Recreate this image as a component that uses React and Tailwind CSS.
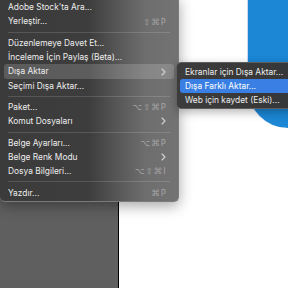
import React from "react";

const Chevron = () => (
  <svg width="5" height="8" viewBox="0 0 5 8" className="shrink-0">
    <path d="M1 1 L4 4 L1 7" fill="none" stroke="#d4d4d4" strokeWidth="1.1" strokeLinecap="round" strokeLinejoin="round" />
  </svg>
);

const Row = ({ label, shortcut, sub, active }) => (
  <div className="h-[14.2px] mx-[4px]">
    <div
      className={
        "h-full flex items-center justify-between pl-[4px] pr-[8px] rounded-[3px] " +
        (active ? "bg-[rgba(255,255,255,0.17)]" : "")
      }
    >
      <span className="text-[#ededed] whitespace-nowrap">{label}</span>
      {shortcut && (
        <span
          className="text-[#a6a6a6] tracking-[1.2px] whitespace-nowrap mr-[-1px]"
          style={{ fontFamily: "'DejaVu Sans', Inter, sans-serif", fontSize: "8.3px" }}
        >
          {shortcut}
        </span>
      )}
      {sub && <Chevron />}
    </div>
  </div>
);

const Sep = () => (
  <div className="h-[7.3px] flex items-center px-[8px]">
    <div className="h-px w-full bg-[rgba(255,255,255,0.14)]" />
  </div>
);

export default function App() {
  return (
    <div
      className="relative w-[288px] h-[288px] overflow-hidden bg-white flex"
      style={{ fontFamily: "Inter, 'Noto Sans', sans-serif" }}
    >
      <div className="w-[119px] h-full bg-[#5f5f5f] border-r border-black" />
      <div className="flex-1 h-full flex justify-end">
        <div className="w-[41px] h-[128px] bg-[#1b87d5] rounded-bl-[42px] border-l border-[#cdd5f3]" />
      </div>

      <div
        className="absolute left-0 top-[-4px] w-[179px] pt-[4.4px] pb-[1.5px] rounded-b-[5px] border-r border-b border-[#7a7a7a] shadow-[0_4px_14px_rgba(0,0,0,0.35)] text-[8.4px] leading-none"
        style={{ background: "linear-gradient(to right, #3b3b3b 0%, #3d3d3d 50%, #5a5a5a 68%, #6e6e6e 82%, #737373 100%)" }}
      >
        <Row label="Adobe Stock'ta Ara..." />
        <Row label="Yerleştir..." shortcut="⇧⌘P" />
        <Sep />
        <Row label="Düzenlemeye Davet Et..." />
        <Row label="İnceleme İçin Paylaş (Beta)..." />
        <Row label="Dışa Aktar" sub active />
        <Row label="Seçimi Dışa Aktar..." />
        <Sep />
        <Row label="Paket..." shortcut="⌥⇧⌘P" />
        <Row label="Komut Dosyaları" sub />
        <Sep />
        <Row label="Belge Ayarları..." shortcut="⌥⌘P" />
        <Row label="Belge Renk Modu" sub />
        <Row label="Dosya Bilgileri..." shortcut="⌥⇧⌘I" />
        <Sep />
        <Row label="Yazdır..." shortcut="⌘P" />
      </div>

      <div
        className="absolute left-[176px] top-[62px] w-[130px] h-[47px] rounded-[5px] border border-[#5e5e5e] pt-[2px] shadow-[0_3px_10px_rgba(0,0,0,0.3)] text-[8.4px] leading-none"
        style={{ background: "linear-gradient(to right, #3c3c3c 0%, #383838 60%, #33373c 100%)" }}
      >
        <div className="h-[14px] mx-[3px] flex items-center px-[5px] text-[#ededed] whitespace-nowrap">Ekranlar için Dışa Aktar...</div>
        <div className="h-[14px] mx-[3px] flex items-center px-[5px] text-white whitespace-nowrap rounded-[3px] bg-[#3a7fe4]">Dışa Farklı Aktar...</div>
        <div className="h-[14px] mx-[3px] flex items-center px-[5px] text-[#ededed] whitespace-nowrap">Web için kaydet (Eski)...</div>
      </div>
    </div>
  );
}
